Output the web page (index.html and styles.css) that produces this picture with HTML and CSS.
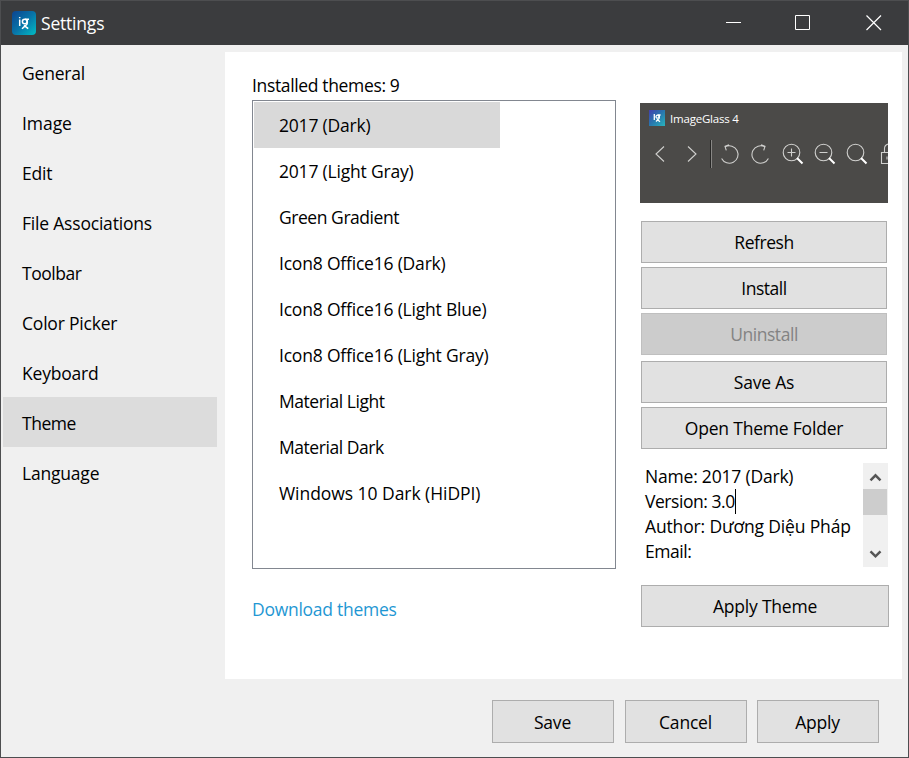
FILE: index.html
```html
<!DOCTYPE html>
<html lang="en">
<head>
<meta charset="utf-8">
<title>Settings</title>
<link rel="stylesheet" href="styles.css">
</head>
<body>
<div class="window">
  <header class="titlebar">
    <svg class="logo" width="24" height="24" viewBox="0 0 24 24">
      <defs><linearGradient id="lg" x1="0" y1="0" x2="1" y2="1"><stop offset="0" stop-color="#0c4390"/><stop offset=".5" stop-color="#0874a8"/><stop offset="1" stop-color="#02bdc4"/></linearGradient></defs>
      <rect width="24" height="24" rx="4" fill="url(#lg)"/>
      <g fill="none" stroke="#fff" stroke-width="1.500"><path d="M7.700 8.500V15M7.700 6v1.300"/><circle cx="12.700" cy="10.500" r="2.300"/><path d="M13 8.200h4M15.300 8.500v3.500q0 1.500-1.800 2.600L10 17.700M12 14.300l4.200 3.400"/></g>
    </svg>
    <span class="title">Settings</span>
    <svg class="caption" width="156" height="16" viewBox="0 0 156 16" fill="none" stroke="#fff">
      <path d="M0 7.500H15"/><path d="M69.500 .500h14v14h-14z"/><path d="M140.500 .500l14.500 14.500M155 .500l-14.500 14.500" stroke-width="1.200"/>
    </svg>
  </header>
  <div class="body">
    <nav class="nav">
      <a>General</a><a class="wide">Image</a><a>Edit</a><a>File Associations</a><a class="tight">Toolbar</a><a>Color Picker</a><a>Keyboard</a><a class="active tight">Theme</a><a>Language</a>
    </nav>
    <main class="panel">
      <section class="left">
        <div class="label">Installed themes: 9</div>
        <ul class="list">
          <li class="selected">2017 (Dark)</li><li>2017 (Light Gray)</li><li class="tight">Green Gradient</li><li>Icon8 Office16 (Dark)</li><li>Icon8 Office16 (Light Blue)</li><li>Icon8 Office16 (Light Gray)</li><li class="tight">Material Light</li><li class="tight">Material Dark</li><li class="wide">Windows 10 Dark (HiDPI)</li>
        </ul>
        <a class="link">Download themes</a>
      </section>
      <section class="right">
        <div class="preview">
          <div class="pv-title">
            <svg width="16" height="16" viewBox="0 0 16 16"><defs><linearGradient id="pg" x1="0" y1="0" x2="1" y2="1"><stop offset="0" stop-color="#433eae"/><stop offset=".5" stop-color="#2878ae"/><stop offset="1" stop-color="#28b4bd"/></linearGradient></defs><rect width="16" height="16" fill="url(#pg)"/><g fill="none" stroke="#fff" stroke-width="1.300"><path d="M5.300 4v6"/><circle cx="8.500" cy="6.700" r="1.500"/><path d="M8.600 5h3M10.300 5v2.700q0 1-1.300 1.800l-2 2M8 9.300l3 2.500"/></g></svg>
            <span>ImageGlass 4</span>
          </div>
          <svg class="pv-tools" width="248" height="32" viewBox="0 0 248 32" fill="none" stroke="#d0d0ce" stroke-width="1.100">
            <path d="M24 8.500L16 16l8 7.500M48 8.500l8 7.500-8 7.500"/>
            <path d="M70.500 2v28" stroke="#272726" stroke-width="1"/><path d="M71.500 2v28" stroke="#888785" stroke-width="1"/>
            <path d="M85.300 8.800A8.700 8.700 0 1 1 81.600 20.500M89 6.800l-4 1.500 1.300 4"/>
            <path d="M124.700 8.800A8.700 8.700 0 1 0 128.400 20.500M121 6.800l4 1.500-1.300 4"/>
            <circle cx="151.500" cy="14.500" r="8.300"/><circle cx="183.500" cy="14.500" r="8.300"/><circle cx="215.500" cy="14.500" r="8.300"/>
            <path d="M147.500 14.500h8M151.500 10.500v8M179.500 14.500h8"/>
            <path d="M157 20l5.500 5.500M189 20l5.500 5.500M221 20l5.500 5.500" stroke="#fff" stroke-width="2"/>
            <path d="M251 14.500h-9.500v11h10M244.500 14.500v-4q0-3.500 4-4.500"/><path d="M247 18.500v3"/>
          </svg>
        </div>
        <div class="buttons">
          <button class="tight">Refresh</button><button class="tight">Install</button><button class="tight" disabled>Uninstall</button><button class="spaced">Save As</button><button>Open Theme Folder</button>
        </div>
        <div class="info">
          <div class="info-text"><div>Name: 2017 (Dark)</div><div class="tight">Version: 3.0<i class="caret"></i></div><div class="author">Author: Dương Diệu Pháp</div><div class="tight">Email:</div></div>
          <div class="scroll">
            <svg width="25" height="26" viewBox="0 0 25 26"><path d="M7.500 17.300l5-5 5 5" fill="none" stroke="#555" stroke-width="2.500"/></svg>
            <div class="thumb"></div>
            <svg class="down" width="25" height="26" viewBox="0 0 25 26"><path d="M7.500 10.300l5 5 5-5" fill="none" stroke="#555" stroke-width="2.500"/></svg>
          </div>
        </div>
        <button class="apply">Apply Theme</button>
      </section>
    </main>
  </div>
  <footer class="footer"><button>Save</button><button>Cancel</button><button>Apply</button></footer>
</div>
</body>
</html>
```
FILE: styles.css
```css
* { box-sizing: border-box; }
body { margin: 0; font-family: "Open Sans", "Noto Sans", sans-serif; font-size: 17.5px; line-height: 25px; letter-spacing: -0.2px; color: #000; }
.window { width: 909px; height: 758px; border: 1px solid #4d4e50; background: #f0f0f0; display: flex; flex-direction: column; overflow: hidden; }
.titlebar { height: 44px; flex: none; background: #3b3c3e; color: #fff; display: flex; align-items: center; padding: 0 26px 0 11px; }
.title { margin-left: 5px; }
.caption { margin-left: auto; }
.body { display: flex; height: 634px; flex: none; }
.nav { width: 214px; margin: 2px 8px 0 2px; flex: none; }
.nav a { display: block; height: 50px; padding: 14px 0 0 19px; }
.nav .active { background: #dcdcdc; }
.panel { width: 677px; margin-top: 7px; background: #fff; display: flex; padding-left: 27px; }
.left { width: 364px; padding-top: 21px; }
.label { height: 27px; letter-spacing: -0.35px; }
.list { list-style: none; margin: 0; width: 364px; height: 469px; border: 1px solid #828790; padding: 1px; }
.list li { height: 46px; width: 246px; padding: 11px 0 0 25px; white-space: nowrap; }
.list .selected { background: #d9d9d9; }
.link { display: block; margin-top: 28px; color: #1f97d3; letter-spacing: -0.27px; }
.right { width: 249px; margin-left: 24px; padding-top: 51px; }
.preview { width: 248px; height: 100px; background: #4b4a48; color: #fff; overflow: hidden; }
.pv-title { height: 35px; padding: 7px 0 0 9px; display: flex; gap: 5px; font-size: 11.5px; line-height: 17px; letter-spacing: -0.2px; }
.pv-tools { display: block; }
button { display: block; font: inherit; letter-spacing: inherit; color: #000; background: #e1e1e1; border: 1px solid #adadad; padding: 1px 0 0; height: 42px; }
.buttons { margin: 18px 0 0 1px; width: 246px; display: flex; flex-direction: column; gap: 4px; }
button:disabled { background: #ccc; border-color: #bfbfbf; color: #838383; }
.spaced { margin-top: 2px; }
.tight { letter-spacing: -0.45px; }
.wide { letter-spacing: -0.05px; }
.info { display: flex; justify-content: space-between; width: 248px; height: 104px; margin-top: 14px; }
.info-text { padding: 1px 0 0 5px; white-space: nowrap; }
.author { letter-spacing: -0.15px; }
.caret { display: inline-block; width: 1px; height: 25px; background: #000; vertical-align: top; }
.scroll { width: 25px; background: #f0f0f0; display: flex; flex-direction: column; }
.scroll svg { display: block; }
.thumb { height: 26px; width: 24px; background: #cdcdcd; }
.scroll .down { margin-top: auto; }
.apply { width: 248px; margin: 18px 0 0 1px; }
.footer { display: flex; padding: 21px 0 0 491px; }
.footer button { width: 122px; height: 43px; margin-right: 11px; padding: 2px 1px 0 0; }
.footer button:nth-child(2) { margin-right: 10px; }
```
